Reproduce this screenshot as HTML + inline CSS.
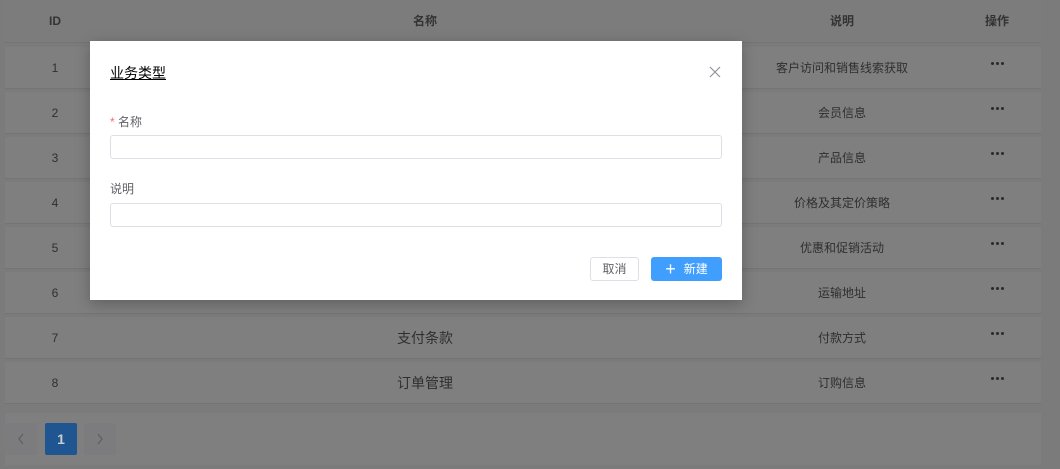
<!DOCTYPE html>
<html><head><meta charset="utf-8"><style>
*{margin:0;padding:0;box-sizing:border-box}
body{width:1060px;height:469px;overflow:hidden;background:#7b7b7b;font-family:"Liberation Sans","Noto Sans CJK SC",sans-serif;position:relative}
.row{position:absolute;left:5px;width:1036px;height:42px;background:#7f7f7f;border-bottom:1px solid #747474}
.c{position:absolute;top:0;height:42px;line-height:42px;text-align:center;color:#2f2f2f;font-size:12px}
.id{left:0;width:100px}.nm{left:300px;width:240px;font-size:14px}.ds{left:737px;width:200px}
.op{position:absolute;left:986px;top:15px;width:14px;height:3px}
.op i{position:absolute;top:0;width:3px;height:3px;border-radius:50%;background:#2a2a2a}
.hd .c{color:#333;font-weight:bold}
.modal{position:absolute;left:90px;top:41px;width:652px;height:259px;background:#fff;box-shadow:0 4px 14px rgba(0,0,0,.25)}
.t{position:absolute;left:20px;top:22px;font-size:14px;color:#000;text-decoration:underline}
.lbl{position:absolute;left:20px;font-size:12px;color:#606266}
.inp{position:absolute;left:20px;width:612px;height:24px;border:1px solid #dcdfe6;border-radius:3px}
.btn{position:absolute;top:216px;height:24px;border-radius:3px;font-size:12px;text-align:center;line-height:22px}
.pg{position:absolute;top:423px;width:32px;height:32px;border-radius:2px;background:#7c7c7e;color:#5a5a5a;text-align:center;line-height:32px;font-size:14px}
</style></head><body>
<div class="row hd" style="top:0;height:43px;background:#7c7c7c"><div class="c id">ID</div><div class="c nm" style="font-size:12px">名称</div><div class="c ds">说明</div><div class="c" style="left:952px;width:80px">操作</div></div>
<div class="row" style="top:47px"><div class="c id">1</div><div class="c ds">客户访问和销售线索获取</div><div class="op"><i style="left:0"></i><i style="left:5px"></i><i style="left:10px"></i></div></div>
<div class="row" style="top:92px"><div class="c id">2</div><div class="c ds">会员信息</div><div class="op"><i style="left:0"></i><i style="left:5px"></i><i style="left:10px"></i></div></div>
<div class="row" style="top:137px"><div class="c id">3</div><div class="c ds">产品信息</div><div class="op"><i style="left:0"></i><i style="left:5px"></i><i style="left:10px"></i></div></div>
<div class="row" style="top:182px"><div class="c id">4</div><div class="c ds">价格及其定价策略</div><div class="op"><i style="left:0"></i><i style="left:5px"></i><i style="left:10px"></i></div></div>
<div class="row" style="top:227px"><div class="c id">5</div><div class="c ds">优惠和促销活动</div><div class="op"><i style="left:0"></i><i style="left:5px"></i><i style="left:10px"></i></div></div>
<div class="row" style="top:272px"><div class="c id">6</div><div class="c ds">运输地址</div><div class="op"><i style="left:0"></i><i style="left:5px"></i><i style="left:10px"></i></div></div>
<div class="row" style="top:317px"><div class="c id">7</div><div class="c nm">支付条款</div><div class="c ds">付款方式</div><div class="op"><i style="left:0"></i><i style="left:5px"></i><i style="left:10px"></i></div></div>
<div class="row" style="top:362px"><div class="c id">8</div><div class="c nm">订单管理</div><div class="c ds">订购信息</div><div class="op"><i style="left:0"></i><i style="left:5px"></i><i style="left:10px"></i></div></div>
<div style="position:absolute;left:5px;top:413px;width:1036px;height:52px;background:#7f7f7f"></div>
<div class="pg" style="left:5px"><svg width="32" height="32"><path d="M22 11L18 16L22 21" fill="none" stroke="#5e5e5e" stroke-width="1.2" transform="translate(-4 0)"/></svg></div>
<div class="pg" style="left:45px;background:#1f5590;color:#ccc;font-weight:bold">1</div>
<div class="pg" style="left:84px"><svg width="32" height="32"><path d="M14 11L18 16L14 21" fill="none" stroke="#5e5e5e" stroke-width="1.2"/></svg></div>
<div class="modal">
<div class="t">业务类型</div>
<svg style="position:absolute;left:619px;top:25px" width="12" height="12"><path d="M1 1L11 11M11 1L1 11" stroke="#909399" stroke-width="1.2"/></svg>
<div class="lbl" style="top:72px"><span style="color:#f56c6c">*</span> 名称</div>
<div class="inp" style="top:94px"></div>
<div class="lbl" style="top:139px">说明</div>
<div class="inp" style="top:162px"></div>
<div class="btn" style="left:500px;width:49px;border:1px solid #dcdfe6;color:#606266">取消</div>
<div class="btn" style="left:561px;width:71px;background:#409eff;color:#fff;line-height:24px"><span style="font-size:18px;vertical-align:-2px;margin-right:8px">+</span>新建</div>
</div>
</body></html>
